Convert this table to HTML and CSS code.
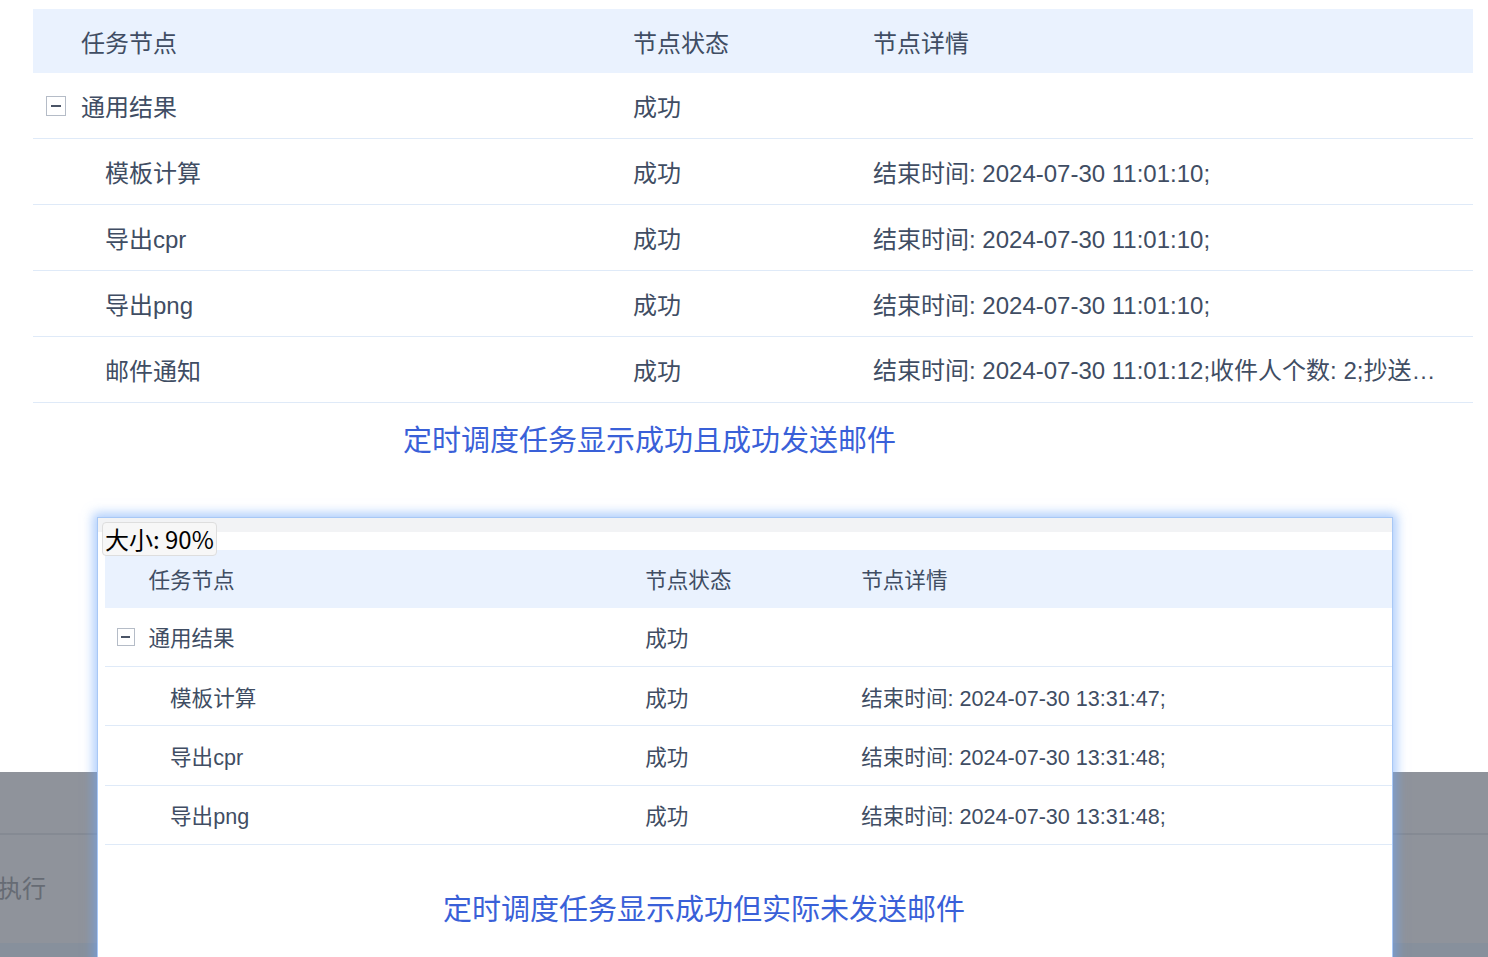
FILE: index.html
```html
<!DOCTYPE html>
<html lang="zh-CN">
<head>
<meta charset="utf-8">
<title>任务节点</title>
<link rel="stylesheet" href="styles.css">
</head>
<body>
<section class="top">
  <div class="tbl">
    <div class="row head">
      <div class="c1">任务节点</div>
      <div class="c2">节点状态</div>
      <div class="c3">节点详情</div>
    </div>
    <div class="row">
      <div class="c1 parent"><span class="toggle"></span>通用结果</div>
      <div class="c2">成功</div>
      <div class="c3"></div>
    </div>
    <div class="row">
      <div class="c1 child">模板计算</div>
      <div class="c2">成功</div>
      <div class="c3">结束时间: 2024-07-30 11:01:10;</div>
    </div>
    <div class="row">
      <div class="c1 child">导出cpr</div>
      <div class="c2">成功</div>
      <div class="c3">结束时间: 2024-07-30 11:01:10;</div>
    </div>
    <div class="row">
      <div class="c1 child">导出png</div>
      <div class="c2">成功</div>
      <div class="c3">结束时间: 2024-07-30 11:01:10;</div>
    </div>
    <div class="row">
      <div class="c1 child">邮件通知</div>
      <div class="c2">成功</div>
      <div class="c3 ell">结束时间: 2024-07-30 11:01:12;收件人个数: 2;抄送人个数: 0;</div>
    </div>
  </div>
  <p class="caption cap1">定时调度任务显示成功且成功发送邮件</p>
</section>

<section class="stage">
  <div class="mask">
    <div class="mask-line"></div>
    <div class="mask-text">执行</div>
    <div class="mask-foot"></div>
  </div>
  <div class="panel">
    <div class="panel-strip"></div>
    <div class="panel-gap"></div>
    <div class="tbl small">
      <div class="row head">
        <div class="c1">任务节点</div>
        <div class="c2">节点状态</div>
        <div class="c3">节点详情</div>
      </div>
      <div class="row">
        <div class="c1 parent"><span class="toggle"></span>通用结果</div>
        <div class="c2">成功</div>
        <div class="c3"></div>
      </div>
      <div class="row">
        <div class="c1 child">模板计算</div>
        <div class="c2">成功</div>
        <div class="c3">结束时间: 2024-07-30 13:31:47;</div>
      </div>
      <div class="row">
        <div class="c1 child">导出cpr</div>
        <div class="c2">成功</div>
        <div class="c3">结束时间: 2024-07-30 13:31:48;</div>
      </div>
      <div class="row">
        <div class="c1 child">导出png</div>
        <div class="c2">成功</div>
        <div class="c3">结束时间: 2024-07-30 13:31:48;</div>
      </div>
    </div>
    <p class="caption cap2">定时调度任务显示成功但实际未发送邮件</p>
    <div class="size-tag">大小: 90%</div>
  </div>
</section>
</body>
</html>
```

FILE: styles.css
```css
* { box-sizing: border-box; }

html, body {
  margin: 0;
  padding: 0;
  background: #ffffff;
  width: 1488px;
  height: 957px;
  overflow: hidden;
}

body {
  font-family: "Liberation Sans", "Noto Sans CJK SC", sans-serif;
  color: #404d63;
}

.top {
  padding: 9px 15px 0 33px;
}

.tbl {
  width: 100%;
}

.row {
  display: grid;
  grid-template-columns: 552px 240px 1fr;
  height: 66px;
  border-bottom: 1px solid #dfeaf8;
  font-size: 24px;
}

.row.head {
  height: 64px;
  background: #eaf2fe;
  border-bottom: none;
}

.row > div {
  display: flex;
  align-items: center;
  padding-left: 48px;
  white-space: nowrap;
  min-width: 0;
}

.row > .c1.parent {
  padding-left: 13px;
}

.row > .c1.child {
  padding-left: 72px;
}

.c3 {
  padding-right: 36px;
}

.row > .ell {
  display: block;
  line-height: 67px;
  text-overflow: ellipsis;
  overflow: hidden;
}

.toggle {
  position: relative;
  flex: none;
  width: 20px;
  height: 20px;
  margin-right: 15px;
  border: 1px solid #b5bcc7;
  background: #ffffff;
}

.toggle::after {
  content: "";
  position: absolute;
  left: 4px;
  right: 4px;
  top: 8px;
  height: 2px;
  background: #4a5466;
}

.caption {
  margin: 0;
  font-family: "Noto Sans CJK SC", sans-serif;
  font-size: 29px;
  color: #3960d8;
  white-space: nowrap;
}

.cap1 {
  height: 74px;
  line-height: 70px;
  padding-left: 370px;
}

/* lower area */
.stage {
  position: relative;
  height: 481px;
  overflow: hidden;
}

.mask {
  position: absolute;
  left: 0;
  right: 0;
  top: 295px;
  bottom: 0;
  background: #8f939b;
}

.mask-line {
  position: absolute;
  left: 0;
  right: 0;
  top: 61px;
  height: 2px;
  background: #858a93;
}

.mask-text {
  position: absolute;
  left: -2px;
  top: 100px;
  font-family: "Noto Sans CJK SC", sans-serif;
  font-size: 24px;
  line-height: 30px;
  color: #666b74;
}

.mask-foot {
  position: absolute;
  left: 0;
  right: 0;
  bottom: 0;
  height: 15px;
  background: #87909c;
}

.panel {
  position: relative;
  margin: 40px 0 0 97px;
  width: 1296px;
  height: 470px;
  background: #ffffff;
  border: 1px solid #a8c8f6;
  border-bottom: none;
  box-shadow: 0 0 10px 4px rgba(110, 165, 250, 0.55);
}

.panel-strip {
  height: 14px;
  background: #f2f3f5;
}

.panel-gap {
  height: 18px;
}

.tbl.small {
  zoom: 0.9;
  width: auto;
  margin-left: 8px;
}

.cap2 {
  height: 128px;
  line-height: 124px;
  padding-left: 345px;
}

.size-tag {
  position: absolute;
  left: 4px;
  top: 4px;
  padding: 0 2px;
  font-family: "Noto Sans CJK SC", sans-serif;
  font-size: 24px;
  line-height: 32px;
  color: #000000;
  background: #f7f7f7;
  border: 1px solid #dedede;
  border-radius: 4px;
}
```
